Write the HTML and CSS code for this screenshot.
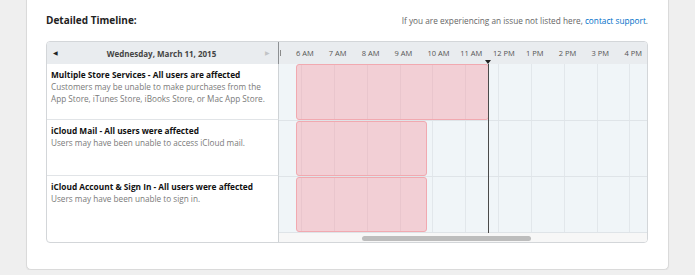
FILE: index.html
```html
<!DOCTYPE html>
<html lang="en">
<head>
    <meta charset="UTF-8">
    <meta name="viewport" content="width=device-width, initial-scale=1.0">
    <title>Detailed Timeline</title>
    <link rel="stylesheet" href="styles.css">
</head>
<body>
    <div class="card">
        <div class="head">
            <h2>Detailed Timeline:</h2>
            <p class="note">If you are experiencing an issue not listed here, <a href="#">contact support</a>.</p>
        </div>
        <div class="table">
            <div class="names">
                <div class="names-head">
                    <span class="arrow">&#9664;</span>
                    <span class="date">Wednesday, March 11, 2015</span>
                    <span class="arrow off">&#9654;</span>
                </div>
                <div class="event">
                    <h3>Multiple Store Services - All users are affected</h3>
                    <p>Customers may be unable to make purchases from the App Store, iTunes Store, iBooks Store, or Mac App Store.</p>
                </div>
                <div class="event">
                    <h3>iCloud Mail - All users were affected</h3>
                    <p>Users may have been unable to access iCloud mail.</p>
                </div>
                <div class="event last">
                    <h3>iCloud Account &amp; Sign In - All users were affected</h3>
                    <p>Users may have been unable to sign in.</p>
                </div>
            </div>
            <div class="timeline">
                <div class="hours">
                    <i class="tick"></i>
                    <span>6 AM</span>
                    <span>7 AM</span>
                    <span>8 AM</span>
                    <span>9 AM</span>
                    <span>10 AM</span>
                    <span>11 AM</span>
                    <span>12 PM</span>
                    <span>1 PM</span>
                    <span>2 PM</span>
                    <span>3 PM</span>
                    <span>4 PM</span>
                </div>
                <div class="lane"><div class="bar" style="left:17px;width:193px"></div></div>
                <div class="lane"><div class="bar" style="left:17px;width:131px"></div></div>
                <div class="lane"><div class="bar" style="left:17px;width:131px"></div></div>
                <div class="scroll"><div class="thumb"></div></div>
                <div class="now"></div>
            </div>
        </div>
    </div>
</body>
</html>
```

FILE: styles.css
```css
body{
    margin: 0;
    background-color: #efefef;
    font-family: "Open Sans", "Liberation Sans", sans-serif;
    color: #333;
}

.card{
    width: 602px;
    margin: -10px 0 0 26px;
    padding: 10px 20px 26px 19px;
    background-color: #fff;
    border: 1px solid #dadada;
    border-radius: 0 0 5px 5px;
    box-shadow: 0 1px 1px rgba(0,0,0,0.06);
}

.head{
    display: flex;
    justify-content: space-between;
    align-items: baseline;
    padding-top: 12px;
    margin-bottom: 13px;
    line-height: 14px;
}

.head h2{
    margin: 0;
    font-size: 10px;
    font-weight: bold;
    color: #222;
}

.note{
    margin: 0;
    font-size: 8.25px;
    color: #666;
}

.note a{
    color: #0070c9;
    text-decoration: none;
}

.table{
    display: flex;
    height: 200px;
    border: 1px solid #d3d6d9;
    border-radius: 4px;
    overflow: hidden;
}

.names{
    width: 232px;
    display: flex;
    flex-direction: column;
    flex: none;
}

.names-head{
    height: 22px;
    display: flex;
    align-items: center;
    justify-content: space-between;
    padding: 0 8px 0 6px;
    background-color: #e9ecef;
    border-right: 1px solid #8d9093;
}

.arrow{
    font-size: 6px;
    color: #222;
}

.arrow.off{
    color: #c2c4c6;
}

.date{
    font-size: 8px;
    font-weight: bold;
    color: #444;
}

.event{
    height: 56px;
    padding: 5px 4px 0;
    box-sizing: border-box;
    border-right: 1px solid #cfd3d6;
    border-bottom: 1px solid #e1e4e7;
}

.event:first-of-type{
    height: 57px;
}

.event.last{
    flex: 1;
    border-bottom: none;
}

.event h3{
    margin: 0;
    font-size: 8.3px;
    line-height: 12px;
    font-weight: bold;
    color: #111;
}

.event p{
    margin: 0;
    font-size: 8.2px;
    line-height: 12px;
    color: #7a7a7a;
}

.timeline{
    flex: 1;
    position: relative;
    overflow: hidden;
}

.hours{
    height: 22px;
    display: flex;
    align-items: center;
    padding-left: 1px;
    background-color: #e9ecef;
    white-space: nowrap;
}

.hours .tick{
    flex: none;
    width: 1px;
    height: 6px;
    margin-right: 15px;
    background-color: #8a8a8a;
}

.hours span{
    flex: none;
    width: 32.85px;
    font-size: 7.5px;
    color: #555;
}

.lane{
    position: relative;
    height: 55px;
    border-bottom: 1px solid #dfe4e8;
    background-color: #f0f5f8;
    background-image: repeating-linear-gradient(to right, transparent 0 22px, #e2e7eb 22px 23px, transparent 23px 32.85px);
}

.lane:nth-of-type(2){
    height: 56px;
}

.bar{
    position: absolute;
    top: 0;
    bottom: 0;
    box-sizing: border-box;
    background-color: rgba(245,150,160,0.4);
    border: 1px solid #f1a9b0;
    border-radius: 3px;
}

.scroll{
    height: 9px;
    background-color: #f7f7f7;
}

.thumb{
    width: 169px;
    height: 5px;
    margin-left: 83px;
    position: relative;
    top: 3px;
    background-color: #bdbdbd;
    border-radius: 3px;
}

.now{
    position: absolute;
    left: 209px;
    top: 22px;
    width: 1px;
    height: 169px;
    background-color: #4a4a4a;
}

.now::before{
    content: "";
    position: absolute;
    left: -3px;
    top: -4px;
    border-left: 3.5px solid transparent;
    border-right: 3.5px solid transparent;
    border-top: 4px solid #222;
}
```
